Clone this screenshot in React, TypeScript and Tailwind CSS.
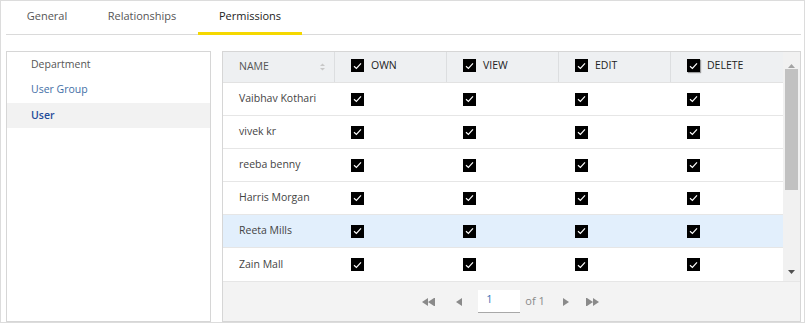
import { clsx } from 'clsx'

const users = ['Vaibhav Kothari', 'vivek kr', 'reeba benny', 'Harris Morgan', 'Reeta Mills', 'Zain Mall']
const perms = ['OWN', 'VIEW', 'EDIT', 'DELETE']

function Check({ shadow }: { shadow?: boolean }) {
  return (
    <span
      className={clsx(
        'inline-flex h-[13px] w-[13px] shrink-0 items-center justify-center bg-black',
        shadow && 'shadow-[1px_1px_1px_rgba(0,0,0,0.35)]'
      )}
    >
      <svg width="9" height="8" viewBox="0 0 9 8" fill="none">
        <path d="M1 4.2 L3.4 6.4 L8 1.4" stroke="white" strokeWidth="1.2" />
      </svg>
    </span>
  )
}

function Tab({ label, active, width }: { label: string; active?: boolean; width: string }) {
  return (
    <div
      className={clsx(
        'flex h-[34px] items-center justify-center pb-[2px] text-[11px]',
        width,
        active ? '-mb-px border-b-[3px] border-[#f5d800] pt-[2px] text-[#222]' : 'text-[#555]'
      )}
    >
      {label}
    </div>
  )
}

export default function App() {
  return (
    <div className="h-[324px] w-[806px] bg-white font-['Open_Sans',sans-serif]">
      <div className="flex h-[323px] w-[805px] flex-col border border-[#dcdcdc] bg-white pl-[5px] pr-[3px]">
        {/* tabs */}
        <div className="flex h-[34px] items-end gap-[2px] border-b border-[#dadada] pl-[2px]">
          <Tab label="General" width="w-[78px]" />
          <Tab label="Relationships" width="w-[108px]" />
          <Tab label="Permissions" width="w-[104px]" active />
        </div>

        <div className="mt-[16px] flex gap-[11px]">
          {/* left list */}
          <div className="flex h-[271px] w-[205px] flex-col border border-[#d6d6d6] text-[10.5px]">
            <div className="flex h-[25px] items-center pl-[24px] text-[#555]">Department</div>
            <div className="flex h-[26px] items-center pl-[24px] text-[#3f6ea6]">User Group</div>
            <div className="flex h-[25px] items-center bg-[#f2f2f2] pl-[24px] font-semibold text-[#1f4c9a]">User</div>
          </div>

          {/* table */}
          <div className="flex h-[271px] w-[579px] flex-col border border-[#d6d6d6] text-[10.5px]">
            <div className="flex h-[229px]">
              <div className="flex w-[560px] flex-col">
                <div className="flex h-[32px] border-b border-[#e2e2e2] bg-[#eef0f2]">
                  <div className="flex w-[112px] items-center justify-between border-r border-[#dcdee0] pl-[16px] pr-[9px] text-[#555]">
                    <span>NAME</span>
                    <svg width="5" height="8" viewBox="0 0 5 8">
                      <path d="M2.5 0.5 L5 3 H0 Z" fill="#c8c8c8" />
                      <path d="M2.5 7.5 L5 5 H0 Z" fill="#c8c8c8" />
                    </svg>
                  </div>
                  {perms.map((p, i) => (
                    <div
                      key={p}
                      className={clsx(
                        'flex w-[112px] items-center gap-[7px] pl-[16px] pb-[3px] text-[#222]',
                        i < 3 && 'border-r border-[#dcdee0]'
                      )}
                    >
                      <Check shadow={p === 'DELETE'} />
                      <span>{p}</span>
                    </div>
                  ))}
                </div>
                {users.map((u, r) => (
                  <div
                    key={u}
                    className={clsx(
                      'flex h-[33px] shrink-0 items-center text-[#444]',
                      r < users.length - 1 && 'border-b border-[#e6e6e6]',
                      u === 'Reeta Mills' && 'bg-[#e2effc]'
                    )}
                  >
                    <div className="w-[112px] pl-[16px]">{u}</div>
                    {perms.map((p) => (
                      <div key={p} className="flex w-[112px] pl-[16px]">
                        <Check />
                      </div>
                    ))}
                  </div>
                ))}
              </div>

              {/* scrollbar */}
              <div className="flex w-[17px] flex-col items-center bg-[#f1f1f1]">
                <div className="flex h-[16px] items-end justify-center">
                  <svg width="7" height="4" viewBox="0 0 7 4">
                    <path d="M3.5 0 L7 4 H0 Z" fill="#a3a3a3" />
                  </svg>
                </div>
                <div className="mt-[1px] h-[121px] w-[13px] bg-[#c1c1c1]" />
                <div className="flex flex-1 items-end justify-center pb-[7px]">
                  <svg width="7" height="4" viewBox="0 0 7 4">
                    <path d="M0 0 H7 L3.5 4 Z" fill="#505050" />
                  </svg>
                </div>
              </div>
            </div>

            {/* pager */}
            <div className="flex flex-1 items-center justify-center border-t border-[#e6e6e6] bg-[#f3f3f3] pr-[2px]">
              <div className="flex items-center">
                <svg width="13" height="8" viewBox="0 0 13 8" className="mr-[21px]">
                  <path d="M0 4 L6 0 V8 Z M6 4 L12 0 V8 Z" fill="#8a8a8a" />
                  <rect x="12" y="0" width="1" height="8" fill="#8a8a8a" />
                </svg>
                <svg width="6" height="8" viewBox="0 0 6 8" className="mr-[16px]">
                  <path d="M0 4 L6 0 V8 Z" fill="#8a8a8a" />
                </svg>
                <div className="flex h-[23px] w-[42px] items-center border-b border-[#a8a8a8] bg-white pl-[8px] pb-[3px] text-[11px] text-[#3a74b8]">
                  1
                </div>
                <span className="ml-[5px] mr-[18px] text-[11px] text-[#8a8a8a]">of 1</span>
                <svg width="6" height="8" viewBox="0 0 6 8" className="mr-[17px]">
                  <path d="M0 0 L6 4 L0 8 Z" fill="#8a8a8a" />
                </svg>
                <svg width="13" height="8" viewBox="0 0 13 8">
                  <rect x="0" y="0" width="1" height="8" fill="#8a8a8a" />
                  <path d="M1 0 L7 4 L1 8 Z M7 0 L13 4 L7 8 Z" fill="#8a8a8a" />
                </svg>
              </div>
            </div>
          </div>
        </div>
      </div>
    </div>
  )
}
